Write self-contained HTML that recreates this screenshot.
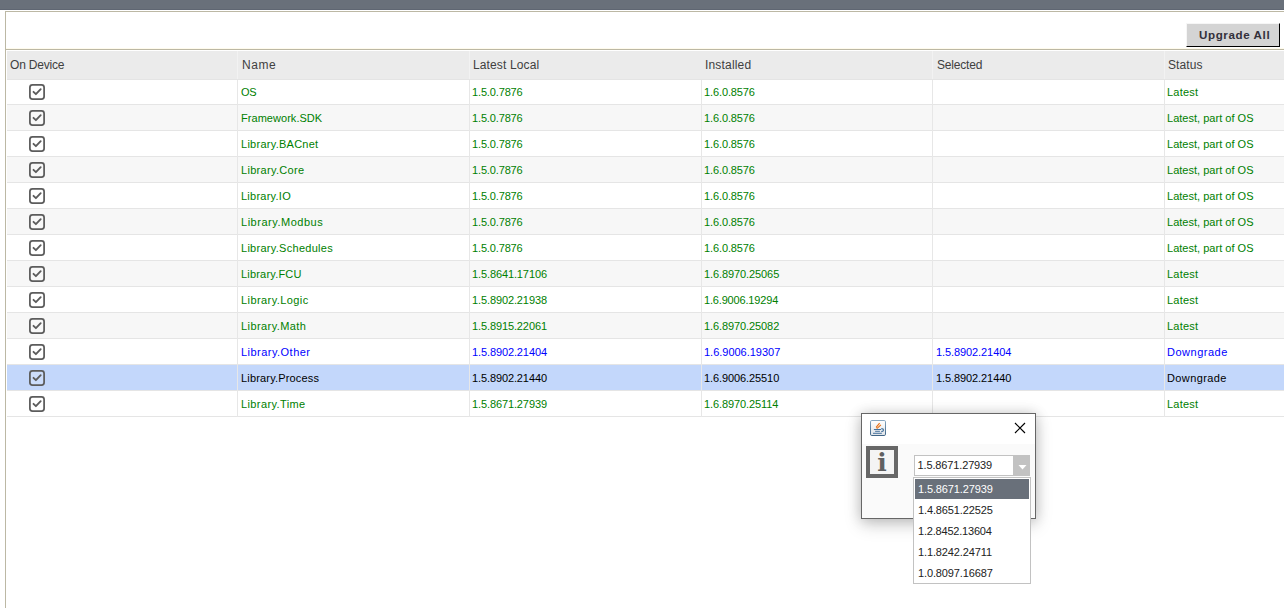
<!DOCTYPE html>
<html><head><meta charset="utf-8"><title>Upgrade</title>
<style>
html,body{margin:0;padding:0;background:#fff;}
body{width:1284px;height:608px;overflow:hidden;position:relative;font-family:"Liberation Sans",sans-serif;}
.abs{position:absolute;}
#topbar{left:0;top:0;width:1284px;height:10px;background:#69707a;}
#topbar2{left:0;top:9px;width:1284px;height:1px;background:#5f6672;}
#frame{left:5px;top:11px;width:1290px;height:610px;border:1px solid #bcb8a4;box-sizing:border-box;}
#hline{left:5px;top:49px;width:1279px;height:1px;background:#bcb8a4;}
#hline0{left:6px;top:48px;width:1278px;height:1px;background:#fffbec;}
#btn{left:1186px;top:23px;width:94px;height:24px;box-sizing:border-box;background:#d4d4d4;border-top:1px solid #f6f6f6;border-left:1px solid #f6f6f6;border-right:1px solid #000;border-bottom:1px solid #000;font-weight:bold;font-size:11.6px;color:#33303a;white-space:nowrap;}
#btn span{position:absolute;left:12px;top:-1px;line-height:23px;}
#thead{left:7px;top:51px;width:1277px;height:28px;background:#ebebeb;border-bottom:1px solid #e4e4e4;z-index:2;}
.th{position:absolute;top:50px;height:30px;line-height:30px;z-index:3;font-size:12px;color:#404040;white-space:nowrap;}
.hsep{position:absolute;top:51px;width:1px;height:28px;background:#f2f2f2;z-index:3;}
.row{position:absolute;left:7px;width:1277px;height:25px;border-bottom:1px solid #e5e5e5;background:#fff;}
.row.alt{background:#f7f7f7;}
.row.sel{background:#c3d7fb;}
.c{position:absolute;top:1px;height:25px;line-height:25px;font-size:11px;white-space:nowrap;}
.g .c{color:#008000;}
.b .c{color:#0000ff;}
.s .c{color:#000;}
.vsep{position:absolute;top:80px;width:1px;height:337px;background:#e7e7e7;}
.cb{position:absolute;left:22px;top:5px;width:16px;height:16px;}
#dlg{left:861px;top:413px;width:175px;height:106px;box-sizing:border-box;border:1px solid #666;background:#fafafa;box-shadow:0 0 12px rgba(0,0,0,.17),0 6px 16px rgba(0,0,0,.18);}
#dtitle{left:0;top:0;width:173px;height:30px;background:#fff;}
#combo{left:914px;top:455px;width:116px;height:21px;box-sizing:border-box;border:1px solid #c2c2c2;background:#fff;font-size:11px;color:#222;line-height:19px;white-space:nowrap;}
#carrow{left:98px;top:-1px;width:17px;height:21px;background:#c2c2c2;}
#list{left:913px;top:477px;width:118px;height:107px;box-sizing:border-box;border:1px solid #c2c2c2;background:#fff;}
.li{position:absolute;left:1px;width:114px;height:20px;line-height:20px;font-size:11px;color:#222;white-space:nowrap;}
.li span{position:absolute;left:3px;top:0;}
.li.on{background:#69707a;color:#fff;}
</style></head><body>
<div id="topbar" class="abs"></div><div id="topbar2" class="abs"></div>
<div id="frame" class="abs"></div>
<div id="hline0" class="abs"></div>
<div id="hline" class="abs"></div>

<div id="btn" class="abs"><span id="btntxt" style="letter-spacing:0.600px;">Upgrade All</span></div>
<div id="thead" class="abs"></div>
<div class="th" id="h0" style="left:10px;letter-spacing:-0.200px;">On Device</div>
<div class="th" id="h1" style="left:242px;letter-spacing:0.533px;">Name</div>
<div class="th" id="h2" style="left:473px;letter-spacing:0.127px;">Latest Local</div>
<div class="th" id="h3" style="left:705px;letter-spacing:0.181px;">Installed</div>
<div class="th" id="h4" style="left:937px;letter-spacing:-0.200px;">Selected</div>
<div class="th" id="h5" style="left:1168px;letter-spacing:0.080px;">Status</div>
<div class="hsep" style="left:237px"></div>
<div class="hsep" style="left:469px"></div>
<div class="hsep" style="left:932px"></div>
<div class="hsep" style="left:1164px"></div>
<div class="row g" style="top:79px"><svg class="cb" viewBox="0 0 16 16"><rect x="0.9" y="0.9" width="14.2" height="14.2" rx="2.6" ry="2.6" fill="rgba(255,255,255,0.15)" stroke="#5c5c5c" stroke-width="1.75"/><path d="M4.5 7.8 L6.9 10.2 L11.7 5.2" fill="none" stroke="#5c5c5c" stroke-width="1.85" stroke-linecap="round" stroke-linejoin="round"/></svg>
<div class="c" id="c0_0" style="left:234px;letter-spacing:-0.300px;">OS</div>
<div class="c" id="c0_1" style="left:465px;letter-spacing:-0.144px;">1.5.0.7876</div>
<div class="c" id="c0_2" style="left:697px;letter-spacing:-0.117px;">1.6.0.8576</div>
<div class="c" id="c0_4" style="left:1160px;letter-spacing:0.240px;">Latest</div>
</div>
<div class="row g alt" style="top:105px"><svg class="cb" viewBox="0 0 16 16"><rect x="0.9" y="0.9" width="14.2" height="14.2" rx="2.6" ry="2.6" fill="rgba(255,255,255,0.15)" stroke="#5c5c5c" stroke-width="1.75"/><path d="M4.5 7.8 L6.9 10.2 L11.7 5.2" fill="none" stroke="#5c5c5c" stroke-width="1.85" stroke-linecap="round" stroke-linejoin="round"/></svg>
<div class="c" id="c1_0" style="left:234px;letter-spacing:0.042px;">Framework.SDK</div>
<div class="c" id="c1_1" style="left:465px;letter-spacing:-0.144px;">1.5.0.7876</div>
<div class="c" id="c1_2" style="left:697px;letter-spacing:-0.117px;">1.6.0.8576</div>
<div class="c" id="c1_4" style="left:1160px;letter-spacing:0.018px;">Latest, part of OS</div>
</div>
<div class="row g" style="top:131px"><svg class="cb" viewBox="0 0 16 16"><rect x="0.9" y="0.9" width="14.2" height="14.2" rx="2.6" ry="2.6" fill="rgba(255,255,255,0.15)" stroke="#5c5c5c" stroke-width="1.75"/><path d="M4.5 7.8 L6.9 10.2 L11.7 5.2" fill="none" stroke="#5c5c5c" stroke-width="1.85" stroke-linecap="round" stroke-linejoin="round"/></svg>
<div class="c" id="c2_0" style="left:234px;letter-spacing:0.262px;">Library.BACnet</div>
<div class="c" id="c2_1" style="left:465px;letter-spacing:-0.144px;">1.5.0.7876</div>
<div class="c" id="c2_2" style="left:697px;letter-spacing:-0.117px;">1.6.0.8576</div>
<div class="c" id="c2_4" style="left:1160px;letter-spacing:0.018px;">Latest, part of OS</div>
</div>
<div class="row g alt" style="top:157px"><svg class="cb" viewBox="0 0 16 16"><rect x="0.9" y="0.9" width="14.2" height="14.2" rx="2.6" ry="2.6" fill="rgba(255,255,255,0.15)" stroke="#5c5c5c" stroke-width="1.75"/><path d="M4.5 7.8 L6.9 10.2 L11.7 5.2" fill="none" stroke="#5c5c5c" stroke-width="1.85" stroke-linecap="round" stroke-linejoin="round"/></svg>
<div class="c" id="c3_0" style="left:234px;letter-spacing:0.309px;">Library.Core</div>
<div class="c" id="c3_1" style="left:465px;letter-spacing:-0.144px;">1.5.0.7876</div>
<div class="c" id="c3_2" style="left:697px;letter-spacing:-0.117px;">1.6.0.8576</div>
<div class="c" id="c3_4" style="left:1160px;letter-spacing:0.018px;">Latest, part of OS</div>
</div>
<div class="row g" style="top:183px"><svg class="cb" viewBox="0 0 16 16"><rect x="0.9" y="0.9" width="14.2" height="14.2" rx="2.6" ry="2.6" fill="rgba(255,255,255,0.15)" stroke="#5c5c5c" stroke-width="1.75"/><path d="M4.5 7.8 L6.9 10.2 L11.7 5.2" fill="none" stroke="#5c5c5c" stroke-width="1.85" stroke-linecap="round" stroke-linejoin="round"/></svg>
<div class="c" id="c4_0" style="left:234px;letter-spacing:0.250px;">Library.IO</div>
<div class="c" id="c4_1" style="left:465px;letter-spacing:-0.144px;">1.5.0.7876</div>
<div class="c" id="c4_2" style="left:697px;letter-spacing:-0.117px;">1.6.0.8576</div>
<div class="c" id="c4_4" style="left:1160px;letter-spacing:0.018px;">Latest, part of OS</div>
</div>
<div class="row g alt" style="top:209px"><svg class="cb" viewBox="0 0 16 16"><rect x="0.9" y="0.9" width="14.2" height="14.2" rx="2.6" ry="2.6" fill="rgba(255,255,255,0.15)" stroke="#5c5c5c" stroke-width="1.75"/><path d="M4.5 7.8 L6.9 10.2 L11.7 5.2" fill="none" stroke="#5c5c5c" stroke-width="1.85" stroke-linecap="round" stroke-linejoin="round"/></svg>
<div class="c" id="c5_0" style="left:234px;letter-spacing:0.519px;">Library.Modbus</div>
<div class="c" id="c5_1" style="left:465px;letter-spacing:-0.144px;">1.5.0.7876</div>
<div class="c" id="c5_2" style="left:697px;letter-spacing:-0.117px;">1.6.0.8576</div>
<div class="c" id="c5_4" style="left:1160px;letter-spacing:0.018px;">Latest, part of OS</div>
</div>
<div class="row g" style="top:235px"><svg class="cb" viewBox="0 0 16 16"><rect x="0.9" y="0.9" width="14.2" height="14.2" rx="2.6" ry="2.6" fill="rgba(255,255,255,0.15)" stroke="#5c5c5c" stroke-width="1.75"/><path d="M4.5 7.8 L6.9 10.2 L11.7 5.2" fill="none" stroke="#5c5c5c" stroke-width="1.85" stroke-linecap="round" stroke-linejoin="round"/></svg>
<div class="c" id="c6_0" style="left:234px;letter-spacing:0.281px;">Library.Schedules</div>
<div class="c" id="c6_1" style="left:465px;letter-spacing:-0.144px;">1.5.0.7876</div>
<div class="c" id="c6_2" style="left:697px;letter-spacing:-0.117px;">1.6.0.8576</div>
<div class="c" id="c6_4" style="left:1160px;letter-spacing:0.018px;">Latest, part of OS</div>
</div>
<div class="row g alt" style="top:261px"><svg class="cb" viewBox="0 0 16 16"><rect x="0.9" y="0.9" width="14.2" height="14.2" rx="2.6" ry="2.6" fill="rgba(255,255,255,0.15)" stroke="#5c5c5c" stroke-width="1.75"/><path d="M4.5 7.8 L6.9 10.2 L11.7 5.2" fill="none" stroke="#5c5c5c" stroke-width="1.85" stroke-linecap="round" stroke-linejoin="round"/></svg>
<div class="c" id="c7_0" style="left:234px;letter-spacing:0.190px;">Library.FCU</div>
<div class="c" id="c7_1" style="left:465px;letter-spacing:-0.112px;">1.5.8641.17106</div>
<div class="c" id="c7_2" style="left:697px;letter-spacing:-0.092px;">1.6.8970.25065</div>
<div class="c" id="c7_4" style="left:1160px;letter-spacing:0.240px;">Latest</div>
</div>
<div class="row g" style="top:287px"><svg class="cb" viewBox="0 0 16 16"><rect x="0.9" y="0.9" width="14.2" height="14.2" rx="2.6" ry="2.6" fill="rgba(255,255,255,0.15)" stroke="#5c5c5c" stroke-width="1.75"/><path d="M4.5 7.8 L6.9 10.2 L11.7 5.2" fill="none" stroke="#5c5c5c" stroke-width="1.85" stroke-linecap="round" stroke-linejoin="round"/></svg>
<div class="c" id="c8_0" style="left:234px;letter-spacing:0.417px;">Library.Logic</div>
<div class="c" id="c8_1" style="left:465px;letter-spacing:-0.112px;">1.5.8902.21938</div>
<div class="c" id="c8_2" style="left:697px;letter-spacing:-0.169px;">1.6.9006.19294</div>
<div class="c" id="c8_4" style="left:1160px;letter-spacing:0.240px;">Latest</div>
</div>
<div class="row g alt" style="top:313px"><svg class="cb" viewBox="0 0 16 16"><rect x="0.9" y="0.9" width="14.2" height="14.2" rx="2.6" ry="2.6" fill="rgba(255,255,255,0.15)" stroke="#5c5c5c" stroke-width="1.75"/><path d="M4.5 7.8 L6.9 10.2 L11.7 5.2" fill="none" stroke="#5c5c5c" stroke-width="1.85" stroke-linecap="round" stroke-linejoin="round"/></svg>
<div class="c" id="c9_0" style="left:234px;letter-spacing:0.418px;">Library.Math</div>
<div class="c" id="c9_1" style="left:465px;letter-spacing:-0.112px;">1.5.8915.22061</div>
<div class="c" id="c9_2" style="left:697px;letter-spacing:-0.092px;">1.6.8970.25082</div>
<div class="c" id="c9_4" style="left:1160px;letter-spacing:0.240px;">Latest</div>
</div>
<div class="row b" style="top:339px"><svg class="cb" viewBox="0 0 16 16"><rect x="0.9" y="0.9" width="14.2" height="14.2" rx="2.6" ry="2.6" fill="rgba(255,255,255,0.15)" stroke="#5c5c5c" stroke-width="1.75"/><path d="M4.5 7.8 L6.9 10.2 L11.7 5.2" fill="none" stroke="#5c5c5c" stroke-width="1.85" stroke-linecap="round" stroke-linejoin="round"/></svg>
<div class="c" id="c10_0" style="left:234px;letter-spacing:0.467px;">Library.Other</div>
<div class="c" id="c10_1" style="left:465px;letter-spacing:-0.112px;">1.5.8902.21404</div>
<div class="c" id="c10_2" style="left:697px;letter-spacing:-0.015px;">1.6.9006.19307</div>
<div class="c" id="c10_3" style="left:929px;letter-spacing:-0.088px;">1.5.8902.21404</div>
<div class="c" id="c10_4" style="left:1160px;letter-spacing:0.513px;">Downgrade</div>
</div>
<div class="row s sel" style="top:365px"><svg class="cb" viewBox="0 0 16 16"><rect x="0.9" y="0.9" width="14.2" height="14.2" rx="2.6" ry="2.6" fill="rgba(255,255,255,0.15)" stroke="#5c5c5c" stroke-width="1.75"/><path d="M4.5 7.8 L6.9 10.2 L11.7 5.2" fill="none" stroke="#5c5c5c" stroke-width="1.85" stroke-linecap="round" stroke-linejoin="round"/></svg>
<div class="c" id="c11_0" style="left:234px;letter-spacing:0.171px;">Library.Process</div>
<div class="c" id="c11_1" style="left:465px;letter-spacing:-0.112px;">1.5.8902.21440</div>
<div class="c" id="c11_2" style="left:697px;letter-spacing:-0.092px;">1.6.9006.25510</div>
<div class="c" id="c11_3" style="left:929px;letter-spacing:-0.088px;">1.5.8902.21440</div>
<div class="c" id="c11_4" style="left:1160px;letter-spacing:0.388px;">Downgrade</div>
</div>
<div class="row g" style="top:391px"><svg class="cb" viewBox="0 0 16 16"><rect x="0.9" y="0.9" width="14.2" height="14.2" rx="2.6" ry="2.6" fill="rgba(255,255,255,0.15)" stroke="#5c5c5c" stroke-width="1.75"/><path d="M4.5 7.8 L6.9 10.2 L11.7 5.2" fill="none" stroke="#5c5c5c" stroke-width="1.85" stroke-linecap="round" stroke-linejoin="round"/></svg>
<div class="c" id="c12_0" style="left:234px;letter-spacing:0.386px;">Library.Time</div>
<div class="c" id="c12_1" style="left:465px;letter-spacing:-0.112px;">1.5.8671.27939</div>
<div class="c" id="c12_2" style="left:697px;letter-spacing:-0.092px;">1.6.8970.25114</div>
<div class="c" id="c12_4" style="left:1160px;letter-spacing:0.240px;">Latest</div>
</div>
<div class="vsep" style="left:237px"></div>
<div class="vsep" style="left:469px"></div>
<div class="vsep" style="left:701px"></div>
<div class="vsep" style="left:932px"></div>
<div class="vsep" style="left:1164px"></div>

<div id="dlg" class="abs">
 <div id="dtitle" class="abs"></div>
 <svg class="abs" style="left:8px;top:6px" width="16" height="16" viewBox="0 0 16 16">
  <defs><linearGradient id="jg" x1="0" y1="0" x2="0" y2="1"><stop offset="0" stop-color="#ffffff"/><stop offset="1" stop-color="#dfe3e8"/></linearGradient>
  <linearGradient id="jb" x1="0" y1="0" x2="0" y2="1"><stop offset="0" stop-color="#86a6c0"/><stop offset="1" stop-color="#3f6486"/></linearGradient></defs>
  <rect x="0.5" y="0.5" width="15" height="15" rx="1.3" ry="1.3" fill="url(#jg)" stroke="url(#jb)"/>
  <path d="M6.1 7.3 L9.6 3.1 M8 7.7 L10.9 4.9 M6.7 6.8 L7.4 8.8" fill="none" stroke="#e96f12" stroke-width="1.1"/>
  <path d="M3.9 9.5 H11 M5.1 11.3 H9.9 M3 13.3 H11.8" fill="none" stroke="#3d6c98" stroke-width="0.95"/>
  <path d="M11.3 8.6 C14.3 8.8 14.3 11.2 11.3 11.6" fill="none" stroke="#3d6c98" stroke-width="1.1"/>
 </svg>
 <svg class="abs" style="left:152px;top:8px" width="12" height="12" viewBox="0 0 12 12"><path d="M1 1 L11 11 M11 1 L1 11" stroke="#000" stroke-width="1.15" fill="none"/></svg>
 <svg class="abs" style="left:4px;top:32px" width="32" height="32" viewBox="0 0 32 32">
  <rect x="2" y="2" width="28" height="28" fill="#f4f4f4" stroke="#676767" stroke-width="4"/>
  <text x="16" y="25.2" text-anchor="middle" font-family="DejaVu Serif, Liberation Serif, serif" font-weight="bold" font-size="25" fill="#5f5f5f">i</text>
 </svg>
</div>
<div id="combo" class="abs"><span id="cbtxt" style="position:absolute;left:2.5px;top:0;letter-spacing:-0.135px;">1.5.8671.27939</span><div id="carrow" class="abs"><svg class="abs" style="left:5px;top:10px" width="10" height="6" viewBox="0 0 10 6"><path d="M0.5 0 H8.5 L4.5 4.5 Z" fill="#fff"/></svg></div></div>
<div id="list" class="abs">
<div class="li on" style="top:1px"><span id="li0" style="letter-spacing:-0.123px;">1.5.8671.27939</span></div>
<div class="li" style="top:22px"><span id="li1" style="letter-spacing:-0.123px;">1.4.8651.22525</span></div>
<div class="li" style="top:43px"><span id="li2" style="letter-spacing:-0.200px;">1.2.8452.13604</span></div>
<div class="li" style="top:64px"><span id="li3" style="letter-spacing:-0.123px;">1.1.8242.24711</span></div>
<div class="li" style="top:85px"><span id="li4" style="letter-spacing:-0.123px;">1.0.8097.16687</span></div>
</div>
</body></html>
